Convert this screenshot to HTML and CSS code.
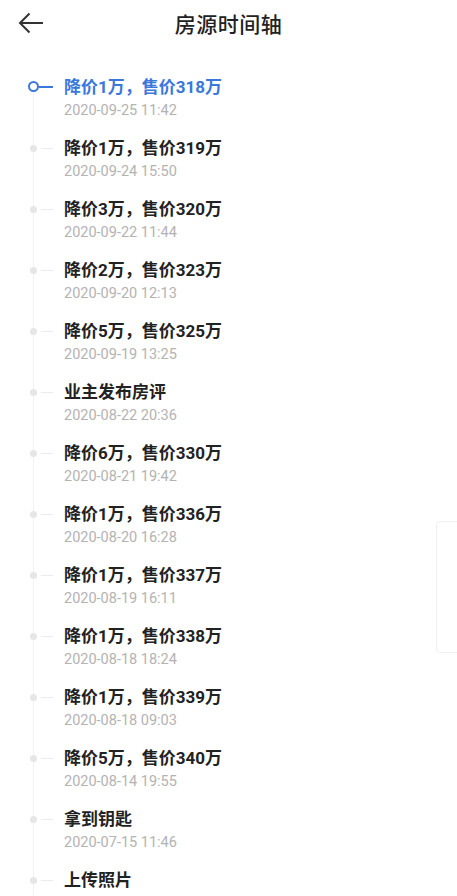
FILE: index.html
```html
<!DOCTYPE html>
<html lang="zh">
<head>
<meta charset="utf-8">
<title>房源时间轴</title>
<link rel="stylesheet" href="styles.css">
</head>
<body>
<div class="page">
  <header class="header">
    <svg class="back" width="26" height="22" viewBox="0 0 26 22"><path d="M25 11H2M11.5 1.5L2 11l9.5 9.5" fill="none" stroke="#333" stroke-width="2"/></svg>
    <h1 class="title">房源时间轴</h1>
  </header>
  <ul class="timeline">
    <li class="item active"><span class="node"></span><div class="text"><div class="name">降价1万，售价318万</div><div class="date">2020-09-25 11:42</div></div></li>
    <li class="item"><span class="node"></span><div class="text"><div class="name">降价1万，售价319万</div><div class="date">2020-09-24 15:50</div></div></li>
    <li class="item"><span class="node"></span><div class="text"><div class="name">降价3万，售价320万</div><div class="date">2020-09-22 11:44</div></div></li>
    <li class="item"><span class="node"></span><div class="text"><div class="name">降价2万，售价323万</div><div class="date">2020-09-20 12:13</div></div></li>
    <li class="item"><span class="node"></span><div class="text"><div class="name">降价5万，售价325万</div><div class="date">2020-09-19 13:25</div></div></li>
    <li class="item"><span class="node"></span><div class="text"><div class="name">业主发布房评</div><div class="date">2020-08-22 20:36</div></div></li>
    <li class="item"><span class="node"></span><div class="text"><div class="name">降价6万，售价330万</div><div class="date">2020-08-21 19:42</div></div></li>
    <li class="item"><span class="node"></span><div class="text"><div class="name">降价1万，售价336万</div><div class="date">2020-08-20 16:28</div></div></li>
    <li class="item"><span class="node"></span><div class="text"><div class="name">降价1万，售价337万</div><div class="date">2020-08-19 16:11</div></div></li>
    <li class="item"><span class="node"></span><div class="text"><div class="name">降价1万，售价338万</div><div class="date">2020-08-18 18:24</div></div></li>
    <li class="item"><span class="node"></span><div class="text"><div class="name">降价1万，售价339万</div><div class="date">2020-08-18 09:03</div></div></li>
    <li class="item"><span class="node"></span><div class="text"><div class="name">降价5万，售价340万</div><div class="date">2020-08-14 19:55</div></div></li>
    <li class="item"><span class="node"></span><div class="text"><div class="name">拿到钥匙</div><div class="date">2020-07-15 11:46</div></div></li>
    <li class="item"><span class="node"></span><div class="text"><div class="name">上传照片</div></div></li>
  </ul>
  <div class="side-card"></div>
</div>
</body>
</html>
```
FILE: styles.css
```css
html, body {
  margin: 0;
  padding: 0;
  background: #fff;
}
body {
  font-family: Roboto, "Noto Sans CJK SC", sans-serif;
  color: #222;
  overflow: hidden;
  height: 896px;
}
.page {
  position: relative;
  width: 457px;
  height: 896px;
  overflow: hidden;
}
.header {
  position: relative;
  height: 46px;
  display: flex;
  align-items: center;
  justify-content: center;
}
.back {
  position: absolute;
  left: 18px;
  top: 12px;
}
.title {
  margin: 0;
  font-size: 21px;
  font-weight: 500;
  color: #222;
  letter-spacing: 0.5px;
}
.timeline {
  list-style: none;
  margin: 0;
  padding: 29px 0 0 0;
  position: relative;
}
.timeline::before {
  content: "";
  position: absolute;
  left: 33px;
  top: 45px;
  bottom: 0;
  width: 1px;
  background: #f2f2f2;
}
.item {
  display: flex;
  height: 61px;
  position: relative;
}
.node {
  width: 64px;
  height: 24px;
  flex: none;
  position: relative;
}
.node::before {
  content: "";
  position: absolute;
  left: 30px;
  top: 8.5px;
  width: 7px;
  height: 7px;
  border-radius: 50%;
  background: #e6e6e6;
}
.node::after {
  content: "";
  position: absolute;
  left: 41px;
  top: 11.5px;
  width: 12px;
  height: 1px;
  background: #ebebeb;
}
.active .node::before {
  left: 28px;
  top: 6px;
  width: 7px;
  height: 7px;
  background: #fff;
  border: 2px solid #3b78db;
}
.active .node::after {
  left: 39px;
  top: 11px;
  width: 14px;
  height: 1.5px;
  background: #3b78db;
}
.name {
  font-size: 17px;
  font-weight: 700;
  line-height: 24px;
  color: #222;
}
.active .name {
  color: #3b78db;
}
.date {
  font-size: 14.5px;
  line-height: 24px;
  color: #b3b3b3;
}
.side-card {
  position: absolute;
  left: 436px;
  top: 521px;
  width: 40px;
  height: 130px;
  border: 1px solid #f1f1f1;
  border-radius: 4px;
  background: #fff;
}
```
